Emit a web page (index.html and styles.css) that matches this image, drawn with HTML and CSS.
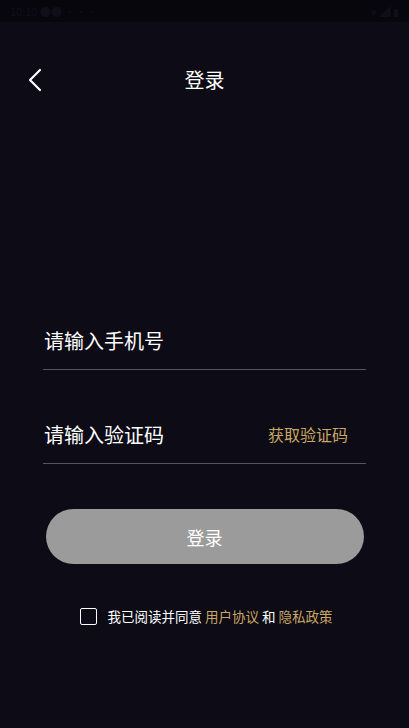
FILE: index.html
```html
<!DOCTYPE html>
<html lang="zh-CN">
<head>
  <meta charset="UTF-8" />
  <meta name="viewport" content="width=device-width, initial-scale=1.0"/>
  <title>登录</title>
  <link rel="stylesheet" href="styles.css">
</head>
<body>

<div class="status-bar">
  <span class="status-left">10:10 ●● ···</span>
  <span class="status-right">▾ ◢ ▮</span>
</div>

<header class="top-bar">
  <a href="#" class="back" aria-label="返回">
    <svg width="14" height="24" viewBox="0 0 14 24">
      <path d="M12 2 L2 12 L12 22" fill="none" stroke="#fff" stroke-width="2.2" stroke-linecap="round" stroke-linejoin="round"/>
    </svg>
  </a>
  <h1>登录</h1>
</header>

<main>
  <form class="login-form" onsubmit="return false">
    <div class="field">
      <input type="tel" placeholder="请输入手机号" maxlength="11" />
    </div>
    <div class="field">
      <input type="text" placeholder="请输入验证码" maxlength="6" />
      <a href="#" class="get-code">获取验证码</a>
    </div>
    <button type="submit">登录</button>
    <label class="agree">
      <input type="checkbox" />
      <span class="box"></span>
      <span>我已阅读并同意 <a href="#">用户协议</a> 和 <a href="#">隐私政策</a></span>
    </label>
  </form>
</main>

</body>
</html>
```

FILE: styles.css
```css
* {
  box-sizing: border-box;
}

body {
  margin: 0;
  min-height: 100vh;
  background-color: #0c0b16;
  color: #fff;
  font-family: "Noto Sans CJK SC", "Noto Sans", sans-serif;
}

.status-bar {
  height: 22px;
  background: #07060d;
  display: flex;
  justify-content: space-between;
  align-items: center;
  padding: 0 10px;
  font-size: 11px;
  color: #100f19;
}

.top-bar {
  position: relative;
  height: 44px;
  margin-top: 36px;
  display: flex;
  align-items: center;
  justify-content: center;
}

.top-bar h1 {
  margin: 0;
  font-size: 20px;
  font-weight: normal;
  line-height: 44px;
}

.back {
  position: absolute;
  left: 28px;
  top: 10px;
  display: flex;
}

main {
  padding: 0 43px;
}

.login-form {
  padding-top: 224px;
}

.field {
  display: flex;
  align-items: center;
  justify-content: space-between;
  padding: 0 18px 15px 1px;
  border-bottom: 1px solid #55545c;
}

.field + .field {
  margin-top: 50px;
}

.field input {
  flex: 1;
  min-width: 0;
  background: transparent;
  border: none;
  outline: none;
  padding: 0;
  height: 28px;
  font-family: inherit;
  font-size: 20px;
  color: #fff;
}

.field input::placeholder {
  color: #fff;
}

.get-code {
  color: #c9a763;
  font-size: 16px;
  text-decoration: none;
}

button {
  display: block;
  width: 318px;
  height: 55px;
  margin: 45px auto 0;
  border: none;
  border-radius: 28px;
  background-color: #9b9b9b;
  color: #fff;
  font-family: inherit;
  font-size: 18px;
  cursor: pointer;
}

.agree {
  margin-top: 42px;
  display: flex;
  align-items: center;
  justify-content: center;
  gap: 10px;
  font-size: 13.5px;
  line-height: 20px;
  padding-left: 4px;
}

.agree input {
  display: none;
}

.agree .box {
  width: 17px;
  height: 17px;
  border: 1.5px solid #fff;
  border-radius: 2px;
}

.agree a {
  color: #c9a763;
  text-decoration: none;
}
```
